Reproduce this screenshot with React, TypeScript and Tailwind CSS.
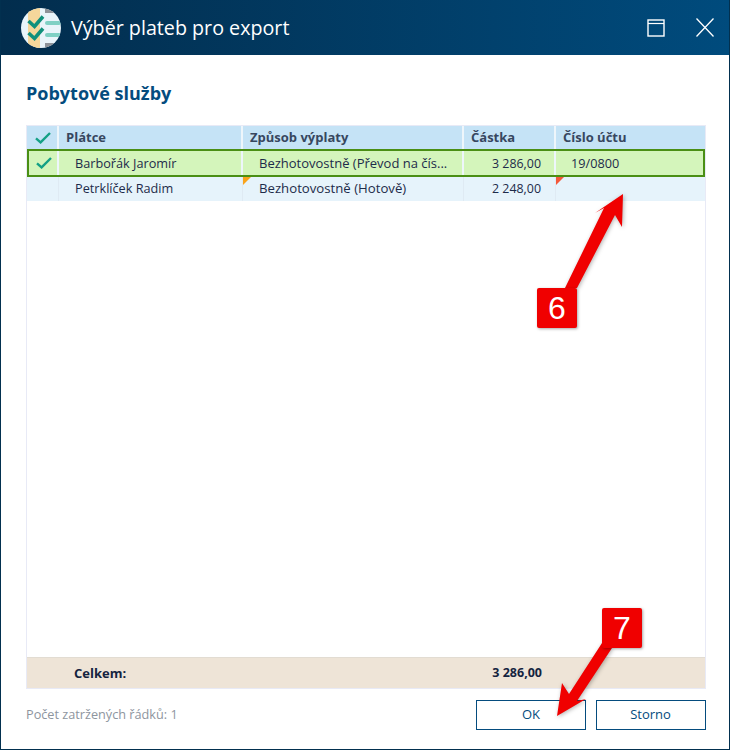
const font = "font-['Open_Sans',sans-serif]";

const CheckMark = () => (
  <svg width="16" height="12" viewBox="0 0 16 12" fill="none">
    <path d="M1 6.4 L5.6 10.4 L15 1" stroke="#14a085" strokeWidth="2.4" />
  </svg>
);

const Logo = () => (
  <svg width="40" height="40" viewBox="0 0 40 40" className="shrink-0">
    <defs>
      <clipPath id="logoClip">
        <circle cx="20" cy="20" r="20" />
      </clipPath>
    </defs>
    <g clipPath="url(#logoClip)">
      <rect width="40" height="40" fill="#e9f4fa" />
      <rect x="7" y="0" width="12" height="40" fill="#f6d79b" />
      <rect x="24" y="0" width="16" height="5" fill="#8d9299" />
      <rect x="24" y="35" width="16" height="5" fill="#8d9299" />
      <rect x="24" y="13" width="16" height="4" rx="2" fill="#7fd0c4" />
      <rect x="24" y="25" width="16" height="4" rx="2" fill="#7fd0c4" />
    </g>
    <path d="M7.5 13 L13.5 18.5 L22 8.5" stroke="#10907c" strokeWidth="3.6" fill="none" />
    <path d="M7.5 25 L13.5 30.5 L22 20.5" stroke="#10907c" strokeWidth="3.6" fill="none" />
  </svg>
);

const Badge = ({ value, className }: { value: string; className: string }) => (
  <div
    className={`absolute flex h-10 w-10 items-center justify-center rounded-[2px] bg-[#f00000] font-['Liberation_Sans',sans-serif] text-[32px] text-white shadow-[1px_1px_3px_rgba(0,0,0,0.35)] ${className}`}
  >
    {value}
  </div>
);

const cols = ["w-[32px]", "w-[184px]", "w-[221px]", "w-[92px]", "flex-1"];

export default function App() {
  return (
    <div className={`relative flex h-[750px] w-[730px] flex-col overflow-hidden border-x border-b border-[#02304f] bg-white ${font}`}>
      {/* title bar */}
      <div className="-mx-px flex h-[55px] shrink-0 items-center bg-gradient-to-r from-[#022d4d] to-[#004b7d] pl-[21px] pr-[16px]">
        <Logo />
        <div className="ml-[10px] flex-1 text-[19.7px] text-white">Výběr plateb pro export</div>
        <svg width="18" height="18" viewBox="0 0 18 18" className="mr-[31px]" fill="none" stroke="#fff">
          <rect x="1" y="1" width="16" height="16" strokeWidth="1.4" />
          <path d="M1 4.5 H17" strokeWidth="1.2" />
        </svg>
        <svg width="18" height="19" viewBox="0 0 18 19" fill="none" stroke="#fff" strokeWidth="1.3">
          <path d="M0.5 0.5 L17.5 18.5 M17.5 0.5 L0.5 18.5" />
        </svg>
      </div>

      <div className="flex min-h-0 flex-1 flex-col pl-[25px] pr-[23px]">
        <h1 className="mt-[26px] h-[44px] text-[18px] font-bold leading-[24px] text-[#044c7e]">Pobytové služby</h1>

        {/* grid */}
        <div className="flex h-[564px] flex-col border border-[#e8eaf6] text-[13px] text-[#1d2b4a]">
          <div className="flex h-[23px] shrink-0 bg-[#c5e3f6] font-bold text-[#37475f]">
            <div className={`${cols[0]} flex items-center justify-center border-r-2 border-[#eef6fb] pl-px`}>
              <CheckMark />
            </div>
            <div className={`${cols[1]} border-r-2 border-[#eef6fb] pl-[7px] leading-[23px]`}>Plátce</div>
            <div className={`${cols[2]} border-r-2 border-[#eef6fb] pl-[7px] leading-[23px]`}>Způsob výplaty</div>
            <div className={`${cols[3]} border-r-2 border-[#eef6fb] pl-[7px] leading-[23px]`}>Částka</div>
            <div className={`${cols[4]} pl-[7px] leading-[23px]`}>Číslo účtu</div>
          </div>

          <div className="flex h-[28px] shrink-0 border-2 border-[#4a8f14] bg-[#d4f5bb] leading-[24px]">
            <div className={`${cols[0]} -ml-[2px] flex items-center justify-center border-r-2 border-[#eef6fb] pb-px pl-[3px]`}>
              <CheckMark />
            </div>
            <div className={`${cols[1]} border-r-2 border-[#eef6fb] pl-[16px] text-[12.7px]`}>Barbořák Jaromír</div>
            <div className={`${cols[2]} border-r-2 border-[#eef6fb] pl-[16px]`}>Bezhotovostně (Převod na čís...</div>
            <div className={`${cols[3]} border-r-2 border-[#eef6fb] pr-[13px] pt-px text-right text-[12.4px]`}>3 286,00</div>
            <div className={`${cols[4]} pl-[15px] text-[12.7px]`}>19/0800</div>
          </div>

          <div className="flex h-[24px] shrink-0 bg-[#e6f3fb] leading-[22px]">
            <div className={`${cols[0]} border-r border-[#dfeaf3]`} />
            <div className={`${cols[1]} border-r border-[#dfeaf3] pl-[16px] text-[12.7px]`}>Petrklíček Radim</div>
            <div className={`${cols[2]} relative border-r border-[#dfeaf3] pl-[16px] text-[13.2px]`}>
              Bezhotovostně (Hotově)
              <div className="absolute left-0 top-0 h-0 w-0 border-r-[8px] border-t-[8px] border-r-transparent border-t-[#f9a31a]" />
            </div>
            <div className={`${cols[3]} border-r border-[#dfeaf3] pr-[14px] pt-px text-right text-[12.4px]`}>2 248,00</div>
            <div className={`${cols[4]} relative`}>
              <div className="absolute left-0 top-0 h-0 w-0 border-r-[8px] border-t-[8px] border-r-transparent border-t-[#f4583a]" />
            </div>
          </div>

          <div className="flex-1" />

          <div className="flex h-[31px] shrink-0 border-t border-[#e2dcd2] bg-[#eee4d7] font-bold leading-[30px] text-[#14233f]">
            <div className="w-[216px] pl-[47px]">Celkem:</div>
            <div className="w-[221px]" />
            <div className="w-[92px] pr-[14px] text-right text-[12.5px]">3 286,00</div>
          </div>
        </div>

        {/* footer */}
        <div className="mt-[11px] flex items-center">
          <div className="flex-1 text-[12.7px] text-[#8e959e]">Počet zatržených řádků: 1</div>
          <button className="h-[30px] w-[110px] border border-[#044c7e] text-[13px] text-[#044c7e]">OK</button>
          <button className="ml-[10px] h-[30px] w-[110px] border border-[#044c7e] pr-px text-[13px] text-[#044c7e]">Storno</button>
        </div>
      </div>

      {/* annotations */}
      <svg width="730" height="750" className="pointer-events-none absolute left-[-1px] top-0 drop-shadow-[1px_1px_2px_rgba(0,0,0,0.3)]">
        <path d="M623 194 L622 227 L615 215 L577 288 L565 288 L604 208 L595 213 Z" fill="#f00000" />
        <path d="M557 716 L562 683 L569 694 L602 643 L612 648 L577 701 L586 699 Z" fill="#f00000" />
      </svg>
      <Badge value="6" className="left-[536px] top-[288px]" />
      <Badge value="7" className="left-[601px] top-[608px]" />
    </div>
  );
}
